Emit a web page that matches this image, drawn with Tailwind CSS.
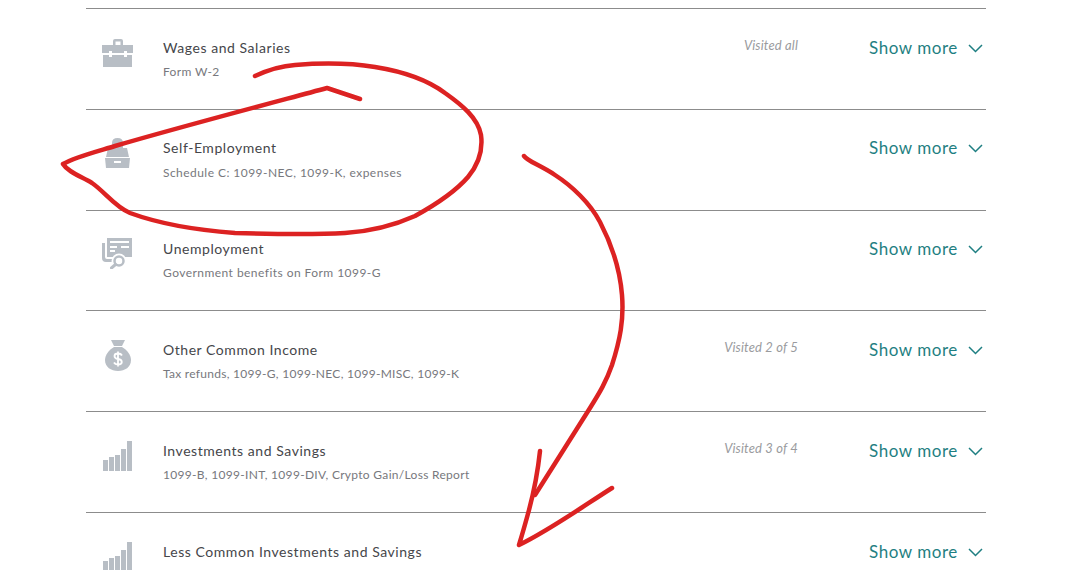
<!DOCTYPE html>
<html lang="en">
<head>
    <meta charset="UTF-8">
    <title>Income</title>
    <script src="https://cdn.jsdelivr.net/npm/@tailwindcss/browser@4"></script>
</head>
<body class="bg-white h-[571px] overflow-hidden relative font-['Lato','Open_Sans',sans-serif]">
    <div class="ml-[86px] w-[900px] pt-[8px]">
        <!-- Wages -->
        <div class="h-[101px] border-t border-[#8c8c8c] flex">
            <div class="w-[77px] pl-[16px] pt-[30px]">
                <svg class="block" width="31" height="28" viewBox="0 0 31 28" fill="#b8bec5"><path d="M11 6V2Q11 0 13 0H19Q21 0 21 2V6H18.500V2.500H13.500V6Z"/><path d="M0 6H31V14H25V12H22V14H10V12H7V14H0Z"/><path d="M1 16H7V18H10V16H22V18H25V16H30V28H1Z"/></svg>
            </div>
            <div class="flex-1 pt-[29px]">
                <div class="text-[14px] leading-[20px] text-[#45464a] tracking-[0.55px]">Wages and Salaries</div>
                <div class="text-[12px] leading-[16px] mt-[6px] text-[#77787d] tracking-[0.35px]">Form W-2</div>
            </div>
            <div class="w-[100px] pt-[28px] pr-[1px] text-right text-[13px] leading-[16px] italic text-[#9a9b9e] tracking-[0.15px]">Visited all</div>
            <div class="w-[187px] pl-[70px] pt-[27px] flex items-start text-[#1f7f82]">
                <span class="text-[17px] leading-[24px] whitespace-nowrap tracking-[0.55px]">Show more</span>
                <svg class="ml-[10px] mt-[8px] shrink-0" width="15" height="9" viewBox="0 0 15 9" fill="none" stroke="#1f7f82" stroke-width="1.500"><path d="M1 1L7.500 7.500L14 1"/></svg>
            </div>
        </div>
        <!-- Self-Employment -->
        <div class="h-[101px] border-t border-[#8c8c8c] flex">
            <div class="w-[77px] pl-[19px] pt-[27px]">
                <svg class="block" width="25" height="31" viewBox="0 0 25 31" fill="#b8bec5"><path d="M7 11V6Q7 1 12.500 1Q18 1 18 6V11Z"/><path d="M3 11H22L24 20H1Z"/><path d="M0 21H25L24 31H1Z"/><path fill="#fff" d="M9 24H16V26H9Z"/></svg>
            </div>
            <div class="flex-1 pt-[28px]">
                <div class="text-[14px] leading-[20px] text-[#45464a] tracking-[0.55px]">Self-Employment</div>
                <div class="text-[12px] leading-[16px] mt-[7px] text-[#77787d] tracking-[0.45px]">Schedule C: 1099-NEC, 1099-K, expenses</div>
            </div>
            <div class="w-[187px] pl-[70px] pt-[26px] flex items-start text-[#1f7f82]">
                <span class="text-[17px] leading-[24px] whitespace-nowrap tracking-[0.55px]">Show more</span>
                <svg class="ml-[10px] mt-[8px] shrink-0" width="15" height="9" viewBox="0 0 15 9" fill="none" stroke="#1f7f82" stroke-width="1.500"><path d="M1 1L7.500 7.500L14 1"/></svg>
            </div>
        </div>
        <!-- Unemployment -->
        <div class="h-[100px] border-t border-[#8c8c8c] flex">
            <div class="w-[77px] pl-[16px] pt-[27px]">
                <svg class="block" width="31" height="31" viewBox="0 0 31 31"><path fill="#b8bec5" d="M5 0H30V19H5Z"/><path fill="#b8bec5" d="M0 5H3V19Q3 21 5 21H11V24H4Q0 24 0 20Z"/><path fill="#fff" d="M8 3H27V5H8ZM8 8H15V10H8ZM19 8H27V10H19ZM8 12H13V14H8Z"/><circle cx="17" cy="23" r="7.500" fill="#fff"/><circle cx="17" cy="23" r="4.500" fill="#fff" stroke="#b8bec5" stroke-width="2.500"/><path d="M13.500 26.500L9.500 30" stroke="#b8bec5" stroke-width="3" stroke-linecap="round"/></svg>
            </div>
            <div class="flex-1 pt-[28px]">
                <div class="text-[14px] leading-[20px] text-[#45464a] tracking-[0.55px]">Unemployment</div>
                <div class="text-[12px] leading-[16px] mt-[6px] text-[#77787d] tracking-[0.45px]">Government benefits on Form 1099-G</div>
            </div>
            <div class="w-[187px] pl-[70px] pt-[26px] flex items-start text-[#1f7f82]">
                <span class="text-[17px] leading-[24px] whitespace-nowrap tracking-[0.55px]">Show more</span>
                <svg class="ml-[10px] mt-[8px] shrink-0" width="15" height="9" viewBox="0 0 15 9" fill="none" stroke="#1f7f82" stroke-width="1.500"><path d="M1 1L7.500 7.500L14 1"/></svg>
            </div>
        </div>
        <!-- Other Common Income -->
        <div class="h-[101px] border-t border-[#8c8c8c] flex">
            <div class="w-[77px] pl-[19px] pt-[29px]">
                <svg class="block" width="26" height="31" viewBox="0 0 26 31"><path fill="#b8bec5" d="M6 0H20L17 6H9Z"/><path fill="#b8bec5" d="M9 7H17C22 10 26 15 26 20C26 27 20 31 13 31C6 31 0 27 0 20C0 15 4 10 9 7Z"/><path fill="none" stroke="#fff" stroke-width="1.800" d="M17 15.500Q16 13.500 13 13.500Q9.500 13.500 9.500 16Q9.500 18.500 13 19Q16.800 19.500 16.800 22Q16.800 24.500 13 24.500Q10 24.500 9 22.500M13 11.500V26.500"/></svg>
            </div>
            <div class="flex-1 pt-[29px]">
                <div class="text-[14px] leading-[20px] text-[#45464a] tracking-[0.55px]">Other Common Income</div>
                <div class="text-[12px] leading-[16px] mt-[6px] text-[#77787d] tracking-[0.28px]">Tax refunds, 1099-G, 1099-NEC, 1099-MISC, 1099-K</div>
            </div>
            <div class="w-[100px] pt-[28px] pr-[1px] text-right text-[13px] leading-[16px] italic text-[#9a9b9e] tracking-[0.15px]">Visited 2 of 5</div>
            <div class="w-[187px] pl-[70px] pt-[27px] flex items-start text-[#1f7f82]">
                <span class="text-[17px] leading-[24px] whitespace-nowrap tracking-[0.55px]">Show more</span>
                <svg class="ml-[10px] mt-[8px] shrink-0" width="15" height="9" viewBox="0 0 15 9" fill="none" stroke="#1f7f82" stroke-width="1.500"><path d="M1 1L7.500 7.500L14 1"/></svg>
            </div>
        </div>
        <!-- Investments and Savings -->
        <div class="h-[101px] border-t border-[#8c8c8c] flex">
            <div class="w-[77px] pl-[17px] pt-[29px]">
                <svg class="block" width="29" height="31" viewBox="0 0 29 31" fill="#b8bec5"><rect x="0" y="19" width="5" height="11"/><rect x="6" y="16" width="5" height="14"/><rect x="12" y="14" width="5" height="16"/><rect x="18" y="8" width="5" height="22"/><rect x="24" y="0" width="5" height="30"/></svg>
            </div>
            <div class="flex-1 pt-[29px]">
                <div class="text-[14px] leading-[20px] text-[#45464a] tracking-[0.55px]">Investments and Savings</div>
                <div class="text-[12px] leading-[16px] mt-[6px] text-[#77787d] tracking-[0.3px]">1099-B, 1099-INT, 1099-DIV, Crypto Gain/Loss Report</div>
            </div>
            <div class="w-[100px] pt-[28px] pr-[1px] text-right text-[13px] leading-[16px] italic text-[#9a9b9e] tracking-[0.15px]">Visited 3 of 4</div>
            <div class="w-[187px] pl-[70px] pt-[27px] flex items-start text-[#1f7f82]">
                <span class="text-[17px] leading-[24px] whitespace-nowrap tracking-[0.55px]">Show more</span>
                <svg class="ml-[10px] mt-[8px] shrink-0" width="15" height="9" viewBox="0 0 15 9" fill="none" stroke="#1f7f82" stroke-width="1.500"><path d="M1 1L7.500 7.500L14 1"/></svg>
            </div>
        </div>
        <!-- Less Common Investments, its second line is below the fold and can't be read -->
        <div class="h-[58px] border-t border-[#8c8c8c] flex overflow-hidden">
            <div class="w-[77px] pl-[17px] pt-[29px]">
                <svg class="block" width="29" height="31" viewBox="0 0 29 31" fill="#b8bec5"><rect x="0" y="19" width="5" height="11"/><rect x="6" y="16" width="5" height="14"/><rect x="12" y="14" width="5" height="16"/><rect x="18" y="8" width="5" height="22"/><rect x="24" y="0" width="5" height="30"/></svg>
            </div>
            <div class="flex-1 pt-[29px]">
                <div class="text-[14px] leading-[20px] text-[#45464a] tracking-[0.55px]">Less Common Investments and Savings</div>
            </div>
            <div class="w-[187px] pl-[70px] pt-[27px] flex items-start text-[#1f7f82]">
                <span class="text-[17px] leading-[24px] whitespace-nowrap tracking-[0.55px]">Show more</span>
                <svg class="ml-[10px] mt-[8px] shrink-0" width="15" height="9" viewBox="0 0 15 9" fill="none" stroke="#1f7f82" stroke-width="1.500"><path d="M1 1L7.500 7.500L14 1"/></svg>
            </div>
        </div>
    </div>

    <!-- hand drawn red marks on top -->
    <svg class="absolute left-0 top-0" width="1071" height="571" viewBox="0 0 1071 571" fill="none" stroke="#dc2222" stroke-width="4.500" stroke-linecap="round" stroke-linejoin="round">
        <path d="M255 76C268 70 280 66 295 65C320 63 350 63 375 67C400 71 425 78 445 93C462 105 478 118 481 135C483 150 478 165 468 177C455 192 435 205 415 216C395 225 375 231 345 233C310 235 270 234 235 233C195 230 160 224 130 213C115 207 105 192 92 183C80 176 68 172 63 164C75 157 95 152 115 146C180 127 260 106 327 88L360 99"/>
        <path d="M524 156C527 161 540 165 555 175C572 186 590 203 600 222C612 245 620 270 622 295C624 320 620 340 612 365C606 382 600 392 590 408C575 432 552 468 535 495"/>
        <path d="M540 451C538 470 533 495 529 510C525 525 522 535 519 545C550 530 585 505 612 488"/>
    </svg>
</body>
</html>
